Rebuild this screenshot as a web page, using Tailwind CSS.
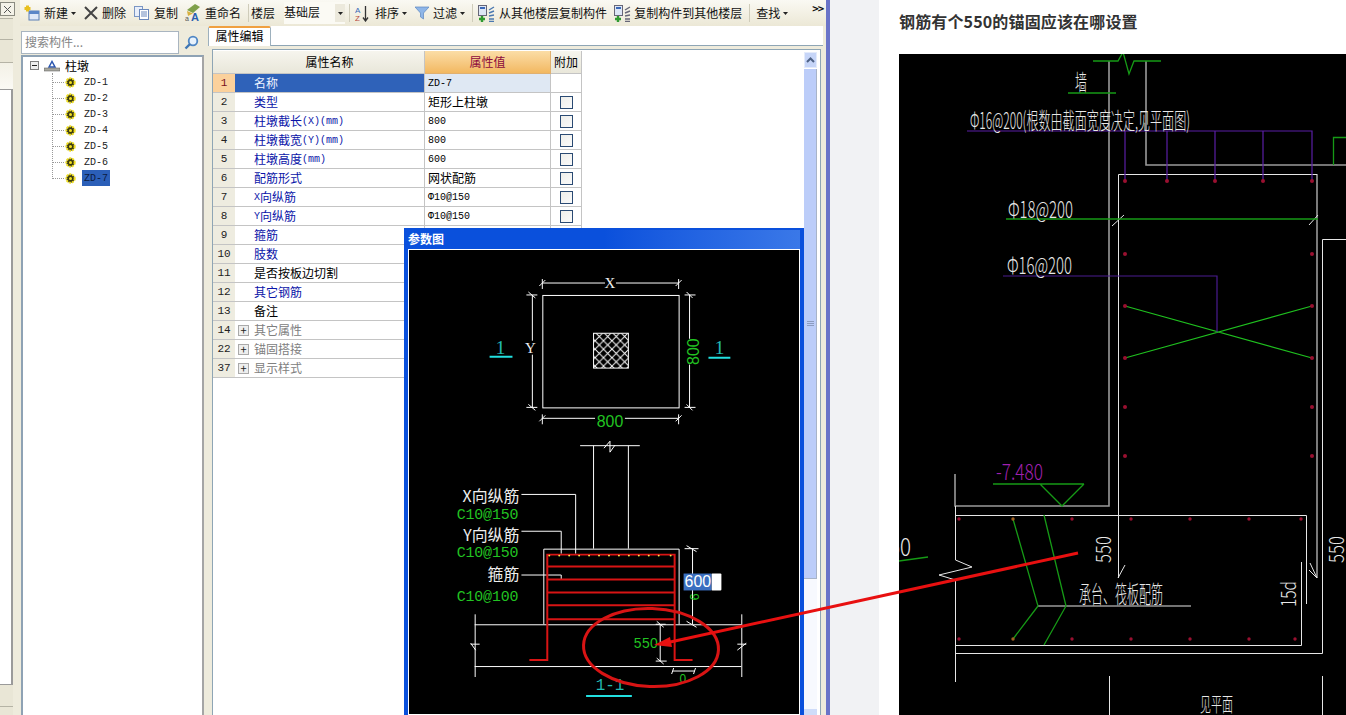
<!DOCTYPE html>
<html lang="zh">
<head>
    <meta charset="UTF-8">
    <title>钢筋有个550的锚固应该在哪设置</title>
    <script src="https://cdn.jsdelivr.net/npm/@tailwindcss/browser@4"></script>
</head>
<body class="bg-white overflow-hidden">
<div class="relative flex w-[1346px] h-[715px] overflow-hidden font-[family-name:'Noto_Sans_CJK_SC',sans-serif] text-[12px] text-black">

    <!-- App window -->
    <div class="flex w-[830px] h-full shrink-0 bg-[#eeebdc] border-r-[4px] border-[#6a74c8]">

        <!-- Left rail -->
        <div class="flex flex-col w-[13px] shrink-0">
            <div class="flex items-center justify-center h-[14px] w-[15px] mt-[2px] border border-[#8a8a80] bg-[#f4f2e8] text-[#444]">
                <svg width="9" height="9" viewBox="0 0 9 9"><path d="M1 1L8 8M8 1L1 8" stroke="#555" fill="none"/></svg>
            </div>
            <div class="h-[22px] mt-[2px] bg-[#e9e6d6] border-t border-b border-[#b5b3a5]"></div>
            <div class="h-[23px] bg-[#e9e6d6] border-b border-[#b5b3a5]"></div>
            <div class="h-[26px] bg-gradient-to-b from-[#f3f1e6] to-[#fbfaf5]"></div>
            <div class="flex-1 bg-white border-t border-r-2 border-b border-[#9a9a9a]"></div>
            <div class="h-[22px] bg-[#e9e6d6] border-b border-[#b5b3a5]"></div>
            <div class="h-[8px] bg-[#e9e6d6]"></div>
        </div>

        <div class="flex flex-col flex-1 min-w-0 pl-[7px]">
            <!-- Toolbar -->
            <div class="flex items-center h-[26px] shrink-0 pl-[4px] bg-gradient-to-b from-[#faf9f3] to-[#ece8d6] whitespace-nowrap text-[#111]">
                <svg width="16" height="16" viewBox="0 0 16 16"><rect x="5" y="6" width="10" height="9" fill="#dfe8f8" stroke="#5b7fb5"/><rect x="5" y="6" width="10" height="3" fill="#5b86c8"/><path d="M3.500 0.500V6.500M0.500 3.500H6.500" stroke="#e8c020" stroke-width="3"/></svg>
                <span class="ml-[4px]">新建</span>
                <svg class="ml-[3px]" width="5" height="3" viewBox="0 0 5 3"><path d="M0 0H5L2.500 3Z" fill="#222"/></svg>
                <svg class="ml-[8px]" width="14" height="14" viewBox="0 0 14 14"><path d="M1 1L13 13M13 1L1 13" stroke="#444" stroke-width="2" fill="none"/></svg>
                <span class="ml-[4px]">删除</span>
                <svg class="ml-[8px]" width="15" height="14" viewBox="0 0 15 14"><rect x="0.500" y="0.500" width="8" height="10" fill="#e8eefa" stroke="#7a96c4"/><rect x="5.500" y="3.500" width="9" height="10" fill="#fff" stroke="#6a88bc"/><path d="M7 6H13M7 8H13M7 10H13" stroke="#6a88bc"/></svg>
                <span class="ml-[5px]">复制</span>
                <svg class="ml-[7px]" width="16" height="18" viewBox="0 0 16 18"><path d="M2 6L10 0L15 3L8 9Z" fill="#7fa04a"/><path d="M2 7L8 9.500L3 12Z" fill="#d8b040"/><text x="0" y="17" font-size="7" font-family="Liberation Sans" fill="#555">a</text><text x="6" y="17" font-size="11" font-weight="bold" font-family="Liberation Sans" fill="#2a5fb0">A</text></svg>
                <span class="ml-[4px]">重命名</span>
                <span class="ml-[7px] w-px h-[18px] bg-[#cfccba]"></span>
                <span class="ml-[2px]">楼层</span>
                <div class="flex items-center justify-between w-[61px] h-[22px] ml-[9px] bg-[#fbfaf4]">
                    <span class="-mt-[3px]">基础层</span>
                    <span class="flex items-center justify-center w-[10px] h-[18px] bg-[#ece9dc]"><svg width="5" height="3" viewBox="0 0 5 3"><path d="M0 0H5L2.500 3Z" fill="#222"/></svg></span>
                </div>
                <span class="ml-[4px] w-px h-[18px] bg-[#cfccba]"></span>
                <svg class="ml-[5px]" width="14" height="17" viewBox="0 0 14 17"><text x="0" y="7.500" font-size="8" font-family="Liberation Sans" fill="#3a68b8">A</text><text x="0" y="16" font-size="8" font-family="Liberation Sans" fill="#b84a3a">Z</text><path d="M10.500 1V15M8 12.500L10.500 16L13 12.500" stroke="#333" stroke-width="1.300" fill="none"/></svg>
                <span class="ml-[6px]">排序</span>
                <svg class="ml-[3px]" width="5" height="3" viewBox="0 0 5 3"><path d="M0 0H5L2.500 3Z" fill="#222"/></svg>
                <svg class="ml-[8px]" width="14" height="14" viewBox="0 0 14 14"><path d="M0 1H14L8.500 7V13L5.500 11V7Z" fill="#8fb6e8" stroke="#5b86c0" stroke-width="0.700"/></svg>
                <span class="ml-[4px]">过滤</span>
                <svg class="ml-[3px]" width="5" height="3" viewBox="0 0 5 3"><path d="M0 0H5L2.500 3Z" fill="#222"/></svg>
                <span class="ml-[7px] w-px h-[18px] bg-[#cfccba]"></span>
                <svg class="ml-[5px]" width="17" height="17" viewBox="0 0 17 17"><rect x="0.500" y="0.500" width="8" height="10" fill="#dde6f5" stroke="#667"/><rect x="2" y="2" width="5" height="2" fill="#3a68b8"/><path d="M4 11V17M1 14H7" stroke="#2f9a30" stroke-width="2.400"/><path d="M11 5L16 2M11 8L16 6M11 11L16 10M11 14L16 14M11 16.500H16" stroke="#4a78b0" stroke-width="1.400"/></svg>
                <span class="ml-[4px]">从其他楼层复制构件</span>
                <svg class="ml-[7px]" width="17" height="17" viewBox="0 0 17 17"><rect x="0.500" y="0.500" width="8" height="10" fill="#dde6f5" stroke="#667"/><rect x="2" y="2" width="5" height="2" fill="#3a68b8"/><path d="M4 11V17M1 14H7" stroke="#2f9a30" stroke-width="2.400"/><path d="M11 5L16 2M11 8L16 6M11 11L16 10M11 14L16 14M11 16.500H16" stroke="#667" stroke-width="1.400"/></svg>
                <span class="ml-[3px]">复制构件到其他楼层</span>
                <span class="ml-[7px] w-px h-[18px] bg-[#cfccba]"></span>
                <span class="ml-[6px]">查找</span>
                <svg class="ml-[3px]" width="5" height="3" viewBox="0 0 5 3"><path d="M0 0H5L2.500 3Z" fill="#222"/></svg>
                <span class="ml-[24px] -mt-[9px] text-[11px] leading-none font-bold tracking-[-1px]">&gt;&gt;</span>
            </div>

            <div class="flex flex-1 min-h-0">
                <!-- Component tree -->
                <div class="flex flex-col w-[183px] shrink-0 ml-px pt-[5px]">
                    <div class="flex h-[23px] shrink-0">
                        <div class="flex items-center w-[158px] h-full pl-[3px] pb-[2px] bg-white border border-[#a9b5c0] text-[#858585]">搜索构件...</div>
                        <div class="flex items-center justify-center flex-1">
                            <svg width="15" height="15" viewBox="0 0 15 15"><circle cx="9" cy="6" r="4.300" fill="#e8f2fc" stroke="#4f86c4" stroke-width="1.800"/><path d="M6 9L1.500 13.500" stroke="#3f76b4" stroke-width="2.400"/></svg>
                        </div>
                    </div>
                    <div class="flex-1 mt-px bg-white border-t-2 border-l-2 border-t-[#8ea2b4] border-l-[#8ea2b4] border-r-2 border-r-[#a5a5a5] pl-[7px]">
                        <div class="flex items-center h-[17px]">
                            <span class="flex items-center justify-center w-[9px] h-[9px] border border-[#808080] bg-[#eee]"><span class="w-[5px] h-px bg-[#222]"></span></span>
                            <svg class="ml-[5px]" width="16" height="12" viewBox="0 0 16 12"><path d="M5 7L8 1.500L11 7Z" fill="#fff" stroke="#2a56b0" stroke-width="1.500"/><rect x="0" y="8" width="16" height="3" fill="#a8a8a0" stroke="#555" stroke-width="0.500"/></svg>
                            <span class="ml-[5px]">柱墩</span>
                        </div>
                        <div id="tree" class="relative ml-[22px]"></div>
                    </div>
                </div>

                <!-- Property panel -->
                <div class="flex flex-col flex-1 min-w-0 ml-[4px] mr-[3px]">
                    <div class="relative flex h-[20px] shrink-0 bg-white border-b border-[#8ea5b5]">
                        <div class="flex items-center justify-center w-[63px] h-[20px] pb-[2px] bg-white border-t-2 border-t-[#f0a040] border-l border-r border-l-[#9db0bd] border-r-[#9db0bd] rounded-t-[2px]">属性编辑</div>
                    </div>
                    <div class="flex flex-1 min-h-0 ml-[4px] mr-[2px] mt-[3px] pt-px bg-white border-t border-l border-r border-[#8ea5b5]">
                        <div class="flex-1 min-w-0">
                            <div id="grid" class="grid grid-cols-[22px_190px_126px_31px] grid-rows-[23px] auto-rows-[19px] w-[369px]">
                                <div class="bg-gradient-to-b from-[#f6f5ee] to-[#e9e7da] border-b border-[#c4c4c4]"></div>
                                <div class="flex items-center justify-center bg-gradient-to-b from-[#f6f5ee] to-[#e9e7da] border-b border-r border-[#c4c4c4]">属性名称</div>
                                <div class="flex items-center justify-center bg-gradient-to-b from-[#fbdda6] to-[#f2b860] text-[#8c0a3c] border-b border-r border-[#e0b070]">属性值</div>
                                <div class="flex items-center justify-center bg-gradient-to-b from-[#f6f5ee] to-[#e9e7da] border-b border-r border-[#c4c4c4]">附加</div>
                            </div>
                        </div>
                        <!-- Scrollbar -->
                        <div class="flex flex-col w-[13px] shrink-0 mr-[3px] mt-px">
                            <div class="flex items-center justify-center h-[16px] bg-[#c6d5f8] border border-[#e4ebfb]">
                                <svg width="9" height="6" viewBox="0 0 9 6"><path d="M1 5L4.500 1.500L8 5" stroke="#4d6185" stroke-width="2" fill="none"/></svg>
                            </div>
                            <div class="flex items-center justify-center h-[510px] mt-px bg-[#bccdf9] border-r border-b border-[#a8b4c8]">
                                <svg width="7" height="6" viewBox="0 0 7 6"><path d="M0 0.500H7M0 2.500H7M0 4.500H7" stroke="#8c9cc0"/></svg>
                            </div>
                            <div class="flex-1 bg-[#f7f9fe]"></div>
                            <div class="h-[6px] bg-[#cfdcf9]"></div>
                        </div>
                    </div>
                </div>
            </div>
        </div>
    </div>

    <!-- Gutter -->
    <div class="w-[49px] h-full shrink-0 bg-[#f1f2f4]"></div>

    <!-- Article -->
    <div class="flex-1 min-w-0 pl-[20px]">
        <h1 class="h-[54px] pt-[9px] text-[16px] leading-[24px] tracking-[0.15px] font-bold text-[#333]">钢筋有个550的锚固应该在哪设置</h1>
        <svg class="block" width="447" height="661" viewBox="899 54 447 661" font-family="'Noto Sans CJK SC', sans-serif">
            <rect x="899" y="54" width="447" height="661" fill="#000"/>
            <!-- wall -->
            <g fill="none" stroke="#9a9a9a" stroke-width="1.600">
                <path d="M1109 61V506H955V474"/>
                <path d="M1146 61V165H1346"/>
                <path d="M1317 174V578"/>
            </g>
            <g fill="none" stroke="#e6e6e6">
                <path d="M1118.500 174.500H1317M1118.500 174.500V578M1118 578L1125 565"/>
                <path d="M1112 226L1124 215M1309 225L1318 215"/>
                <path d="M1346 239.500H1322.500V653.500H955.500"/>
                <path d="M955.500 506V560L972 567L939 575L955.500 580V682"/>
                <path d="M955 515.500H1306.500V604"/>
                <path d="M955 645.500H1301.500V562"/>
                <path d="M1038 606H1191"/>
                <path d="M1109.500 676V715M1322.500 676V715"/>
                <path d="M1310 563L1317 578L1309 570"/>
            </g>
            <!-- green lines -->
            <g fill="none" stroke="#169a16" stroke-width="1.300">
                <path d="M1093 61H1118L1123 52L1129 74L1134 61H1161"/>
                <path d="M1068 93H1116"/>
                <path d="M1006 219H1318" stroke-width="1.500"/>
                <path d="M1333.500 165V137.500H1346"/>
                <path d="M993 484H1084M1040 484L1062 506L1084 484"/>
                <path d="M1013 519L1038 606L1013 639M1044 515L1066 606L1044 645"/>
                <path d="M899 561L928 557"/>
            </g>
            <path d="M1125 306L1312 358M1125 358L1312 306" stroke="#1fc01f" stroke-width="1.200" fill="none"/>
            <!-- purple leaders -->
            <g fill="none" stroke="#5a1ea6" stroke-width="1.200">
                <path d="M967 131H1312V181M1125 131V181M1167 131V181M1215 131V181M1263 131V181"/>
                <path d="M1003 276H1217V332" stroke="#4a1c90"/>
            </g>
            <!-- rebar dots -->
            <g fill="#9a1030">
                <circle cx="1125" cy="181" r="2"/><circle cx="1167" cy="181" r="2"/><circle cx="1215" cy="181" r="2"/><circle cx="1263" cy="181" r="2"/><circle cx="1312" cy="181" r="2"/>
                <circle cx="1125" cy="254" r="2"/><circle cx="1312" cy="254" r="2"/>
                <circle cx="1125" cy="306" r="2"/><circle cx="1312" cy="306" r="2"/>
                <circle cx="1125" cy="358" r="2"/><circle cx="1312" cy="358" r="2"/>
                <circle cx="1125" cy="407" r="2"/><circle cx="1312" cy="407" r="2"/>
                <circle cx="1125" cy="456" r="2"/><circle cx="1312" cy="456" r="2"/>
                <circle cx="959" cy="519" r="1.700"/><circle cx="1013" cy="519" r="1.700" fill="#a06020"/><circle cx="1072" cy="519" r="1.700"/><circle cx="1131" cy="519" r="1.700"/><circle cx="1190" cy="519" r="1.700"/><circle cx="1249" cy="519" r="1.700"/><circle cx="1301" cy="519" r="1.700"/>
                <circle cx="959" cy="639" r="1.700"/><circle cx="1013" cy="639" r="1.700" fill="#a06020"/><circle cx="1072" cy="639" r="1.700"/><circle cx="1131" cy="639" r="1.700"/><circle cx="1190" cy="639" r="1.700"/><circle cx="1249" cy="639" r="1.700"/><circle cx="1295" cy="639" r="1.700"/>
            </g>
            <!-- CAD text -->
            <g fill="#e8e8e8" font-weight="300">
                <text x="1075" y="90" font-size="22" textLength="12" lengthAdjust="spacingAndGlyphs">墙</text>
                <text x="970" y="129" font-size="23" textLength="220" lengthAdjust="spacingAndGlyphs">Φ16@200(根数由截面宽度决定,见平面图)</text>
                <text x="1008" y="218" font-size="23" textLength="65" lengthAdjust="spacingAndGlyphs">Φ18@200</text>
                <text x="1007" y="274" font-size="23" textLength="65" lengthAdjust="spacingAndGlyphs">Φ16@200</text>
                <text x="1079" y="603" font-size="24" textLength="84" lengthAdjust="spacingAndGlyphs">承台、筏板配筋</text>
                <text x="1200" y="712" font-size="20" textLength="33" lengthAdjust="spacingAndGlyphs">见平面</text>
                <text transform="translate(1111 563) rotate(-90)" font-size="20" textLength="27" lengthAdjust="spacingAndGlyphs">550</text>
                <text transform="translate(1344 563) rotate(-90)" font-size="20" textLength="27" lengthAdjust="spacingAndGlyphs">550</text>
                <text transform="translate(1296 607) rotate(-90)" font-size="20" textLength="26" lengthAdjust="spacingAndGlyphs">15d</text>
                <text x="889" y="556" font-size="24" textLength="22" lengthAdjust="spacingAndGlyphs">50</text>
            </g>
            <text x="996" y="480" font-size="22" font-weight="300" fill="#a020b0" textLength="47" lengthAdjust="spacingAndGlyphs">-7.480</text>
        </svg>
    </div>

    <!-- Parameter diagram window -->
    <div class="absolute left-[404px] top-[228px] w-[400px] h-[490px] flex flex-col bg-[#0a50dc] border-x-[4px] border-t-[2px] border-[#0a50dc]">
        <div class="flex items-center h-[19px] pb-[2px] shrink-0 bg-gradient-to-r from-[#0a50dc] via-[#0a50dc] to-[#3a78e8] text-white font-bold">参数图</div>
        <svg class="block border border-white bg-black" width="392" height="466" viewBox="408 249 392 466" font-family="'Noto Sans CJK SC', sans-serif">
            <defs>
                <pattern id="hatch" width="8.500" height="8.500" patternUnits="userSpaceOnUse">
                    <path d="M0 0L8.500 8.500M8.500 0L0 8.500" stroke="#fff" stroke-width="1"/>
                </pattern>
            </defs>
            <!-- plan -->
            <g fill="none" stroke="#fff">
                <rect x="542.500" y="294.500" width="137" height="113"/>
                <path d="M542 282H605M616 282H679M542 278V288M679 278V288M539 285L545 279M676 285L682 279"/>
                <path d="M532 294V340M532 354V407M526 294H537M526 407H537M528 291L535 297M528 404L535 410"/>
                <path d="M690 294V338M690 364V407M685 294H696M685 407H696M687 291L693 297M687 404L693 410"/>
                <path d="M542 418H595M625 418H679M542 414V424M679 414V424M539 421L545 415M676 421L682 415"/>
            </g>
            <rect x="593.500" y="332.500" width="35" height="35" fill="url(#hatch)" stroke="#fff"/>
            <g font-family="'Liberation Serif', serif" fill="#eee" font-size="15" text-anchor="middle">
                <text x="610" y="287">X</text>
                <text x="530" y="352">Y</text>
            </g>
            <g fill="#22c322" font-size="16" font-family="'Liberation Sans', sans-serif" text-anchor="middle">
                <text x="610" y="426.500">800</text>
                <text transform="translate(699 351) rotate(-90)">800</text>
            </g>
            <g fill="#22b8b0" font-size="20" font-family="'Liberation Serif', serif" text-anchor="middle">
                <text x="500" y="353">1</text>
                <text x="720" y="353">1</text>
                <text x="610" y="691" font-family="'Liberation Mono', monospace" font-size="16">1-1</text>
            </g>
            <path d="M489 356H512M709 357H731M586 697H632" stroke="#22e0e0" stroke-width="2"/>

            <!-- section -->
            <g fill="none" stroke="#fff">
                <path d="M580 445.500H640M593.500 445.500V549M628.500 445.500V549"/>
                <path d="M604 448L610 441L610 452L615 445" stroke-width="1"/>
                <path d="M543.500 625V549.500H679.500V625"/>
                <path d="M474 625.500H742M474 667.500H742M474.500 615V678M742.500 615V678"/>
                <path d="M470 645L479 645M470 644L475 651M738 645L747 645M738 651L747 644"/>
                <path d="M521 494.500H575.500V554M521 531.500H561V554M521 575.500H561V580"/>
                <path d="M693 549V625M685 549H699M687 546L697 552M687 622L697 628"/>
                <path d="M660.500 625V662M656 625H666M656 662H667M657 622L664 628M657 659L664 665"/>
                <path d="M673 672H695M674 669L672 675M696 669L694 675"/>
            </g>
            <!-- rebar -->
            <g fill="none" stroke="#d81414" stroke-width="2">
                <path d="M529 661H547V555H675V661H693"/>
                <path d="M547 567H675M547 580H675M547 593H675M547 606H675M547 620H675"/>
            </g>
            <g fill="#ffe84a">
                <circle cx="549" cy="556" r="1"/><circle cx="559" cy="556" r="1"/><circle cx="569" cy="556" r="1"/><circle cx="579" cy="556" r="1"/><circle cx="589" cy="556" r="1"/><circle cx="599" cy="556" r="1"/><circle cx="609" cy="556" r="1"/><circle cx="619" cy="556" r="1"/><circle cx="629" cy="556" r="1"/><circle cx="639" cy="556" r="1"/><circle cx="649" cy="556" r="1"/><circle cx="659" cy="556" r="1"/><circle cx="671" cy="556" r="1"/>
            </g>
            <g fill="#eee" font-size="16" text-anchor="end">
                <text x="519" y="502">X向纵筋</text>
                <text x="519" y="541">Y向纵筋</text>
                <text x="519" y="581">箍筋</text>
            </g>
            <g fill="#22c322" font-size="15" font-family="'Liberation Mono', monospace">
                <text x="456" y="519" textLength="62">C10@150</text>
                <text x="456" y="557" textLength="62">C10@150</text>
                <text x="456" y="602" textLength="62">C10@100</text>
                <text x="634" y="649" font-size="14" textLength="24" font-family="'Liberation Sans', sans-serif">550</text>
                <text x="680" y="684" font-size="12" font-family="'Liberation Sans', sans-serif">0</text>
                <text transform="translate(699 601) rotate(-90)" font-size="13" font-family="'Liberation Sans', sans-serif">6</text>
            </g>
            <rect x="712" y="574" width="10" height="17" fill="#fff" rx="1"/>
            <rect x="684" y="574" width="28" height="17" fill="#3a6fc0"/>
            <text x="685" y="588" font-size="16" fill="#fff" font-family="'Liberation Sans', sans-serif">600</text>
        </svg>
    </div>

    <!-- Red annotation over everything -->
    <svg class="absolute inset-0 pointer-events-none" width="1346" height="715" viewBox="0 0 1346 715">
        <ellipse cx="651" cy="647.500" rx="67.500" ry="39" transform="rotate(2 651 647.500)" fill="none" stroke="#d81414" stroke-width="3"/>
        <path d="M1078 553L668 642.500" stroke="#e81010" stroke-width="3" fill="none"/>
        <path d="M654 645L670 637L672 647Z" fill="#e81010"/>
    </svg>
</div>

<script>
    // Tree nodes
    const tree = document.getElementById('tree');
    const nodes = ['ZD-1', 'ZD-2', 'ZD-3', 'ZD-4', 'ZD-5', 'ZD-6', 'ZD-7'];
    tree.innerHTML = '<div class="absolute left-0 -top-[1px] h-[104px] border-l border-dotted border-[#999]"></div>';
    nodes.forEach((name, i) => {
        const selected = i === nodes.length - 1;
        tree.innerHTML += `
            <div class="flex items-center h-[16px]">
                <span class="w-[12px] border-t border-dotted border-[#999]"></span>
                <svg class="ml-[1px]" width="11" height="11" viewBox="0 0 11 11">
                    <circle cx="5.500" cy="5.500" r="4.200" fill="#3a3a10" stroke="#f2e020" stroke-width="2" stroke-dasharray="2 1"/>
                    <circle cx="5.500" cy="5.500" r="1.500" fill="#f2e020"/>
                </svg>
                <span class="flex items-center h-[16px] ml-[6px] px-[2px] font-[family-name:'Liberation_Mono',monospace] text-[10px] ${selected ? 'bg-[#2b5fb8] text-[#0b1b3f]' : 'text-[#222]'}">${name}</span>
            </div>`;
    });

    // Property rows
    const latin = s => `<span class="font-[family-name:'Liberation_Mono',monospace] text-[10px]">${s}</span>`;
    const rows = [
        { no: 1, name: '名称', value: latin('ZD-7'), selected: true },
        { no: 2, name: '类型', value: '矩形上柱墩', blue: true, check: true },
        { no: 3, name: '柱墩截长' + latin('(X)(mm)'), value: latin('800'), blue: true, check: true },
        { no: 4, name: '柱墩截宽' + latin('(Y)(mm)'), value: latin('800'), blue: true, check: true },
        { no: 5, name: '柱墩高度' + latin('(mm)'), value: latin('600'), blue: true, check: true },
        { no: 6, name: '配筋形式', value: '网状配筋', blue: true, check: true },
        { no: 7, name: latin('X') + '向纵筋', value: latin('Φ10@150'), blue: true, check: true },
        { no: 8, name: latin('Y') + '向纵筋', value: latin('Φ10@150'), blue: true, check: true },
        { no: 9, name: '箍筋', value: '', blue: true, check: true },
        { no: 10, name: '肢数', value: '', blue: true, check: true },
        { no: 11, name: '是否按板边切割', value: '', check: true },
        { no: 12, name: '其它钢筋', value: '', blue: true, check: true },
        { no: 13, name: '备注', value: '', check: true },
        { no: 14, name: '其它属性', group: true },
        { no: 22, name: '锚固搭接', group: true },
        { no: 37, name: '显示样式', group: true }
    ];
    const grid = document.getElementById('grid');
    rows.forEach(row => {
        let html = `<div class="flex items-center justify-center border-b border-[#c4c4c4] font-[family-name:'Liberation_Mono',monospace] text-[11px] ${row.selected ? 'bg-[#fbd19c] text-[#7a1020]' : 'bg-[#eeece0] text-[#222]'}">${row.no}</div>`;
        if (row.group) {
            html += `<div class="col-span-3 flex items-center pl-[3px] border-b border-[#c4c4c4] text-[#808080]">
                <span class="flex items-center justify-center w-[11px] h-[11px] border border-[#aaa] bg-[#eee] text-[#222] text-[11px] leading-none">+</span>
                <span class="ml-[5px]">${row.name}</span>
            </div>`;
        } else {
            html += `<div class="flex items-center pl-[19px] border-b border-r border-[#c4c4c4] ${row.selected ? 'bg-[#2f62b9] text-[#eef3ff]' : row.blue ? 'text-[#0a14a8]' : 'text-black'}">${row.name}</div>`;
            html += `<div class="flex items-center pl-[3px] border-b border-r border-[#c4c4c4] ${row.selected ? 'bg-[#dfe8f3]' : ''}">${row.value}</div>`;
            html += `<div class="flex items-center justify-center border-b border-r border-[#c4c4c4]">${row.check ? '<span class="w-[13px] h-[13px] border border-[#2a4a73] bg-gradient-to-br from-[#eeeeea] to-[#fafafa]"></span>' : ''}</div>`;
        }
        grid.innerHTML += html;
    });
</script>
</body>
</html>
